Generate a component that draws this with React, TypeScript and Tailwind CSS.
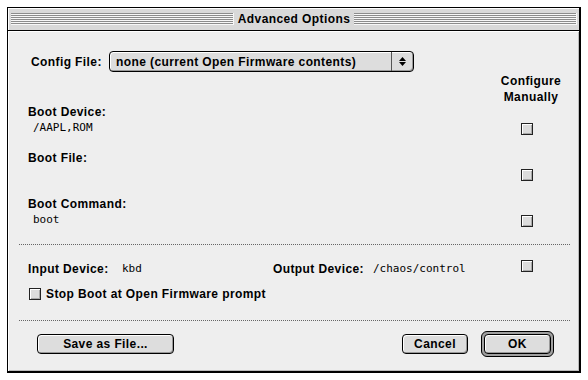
import React from "react";

const label = "font-['Liberation_Sans',Arial,sans-serif] font-bold text-[12px] leading-[16px] tracking-[0.4px] text-black";
const value = "font-['DejaVu_Sans_Mono',monospace] text-[11px] leading-[16px] text-black";

function Check() {
  return (
    <div className="w-[12px] h-[12px] border border-[#222] bg-[#dcdcdc] shadow-[inset_1px_1px_0_#fff,inset_-1px_-1px_0_#a8a8a8]" />
  );
}

function Stripes() {
  return (
    <div className="flex-1 h-[12px] bg-[repeating-linear-gradient(to_bottom,#8c8c8c_0px,#8c8c8c_1px,#f7f7f7_1px,#f7f7f7_2px)] shadow-[inset_-1px_-1px_0_#f7f7f7]" />
  );
}

function Button({ children, w }: { children: React.ReactNode; w: string }) {
  return (
    <div
      className={`${w} h-[20px] rounded-[4px] border border-black bg-[#dddddd] shadow-[inset_1px_1px_0_#fff,inset_-1px_-1px_0_#999] flex items-center justify-center ${label}`}
    >
      {children}
    </div>
  );
}

function FieldRow({ name, val }: { name: string; val?: string }) {
  return (
    <div className="flex h-[46px]">
      <div className="flex-1 pl-[20px]">
        <div className={label}>{name}</div>
        <div className={`${value} pl-[5px]`}>{val}</div>
      </div>
      <div className="w-[80px] mr-[12px] flex justify-center pt-[19px]">
        <Check />
      </div>
    </div>
  );
}

export default function App() {
  return (
    <div className="w-[588px] min-h-[380px] bg-white pt-[7px] pl-[7px]">
      <div className="w-[574px] h-[366px] border border-black border-r-2 border-b-2 flex flex-col bg-[#eeeeee]">
        {/* title bar */}
        <div className="h-[23px] bg-[#d9d9d9] border-b border-black flex items-center pl-[3px] pr-[2px] shadow-[inset_1px_1px_0_#fff]">
          <Stripes />
          <div className={`${label} px-[4px]`}>Advanced Options</div>
          <Stripes />
        </div>

        {/* content */}
        <div className="flex-1 flex flex-col shadow-[inset_1px_1px_0_#fff,inset_-1px_-1px_0_#bbb]">
          <div className="flex items-center h-[21px] mt-[20px] pl-[23px]">
            <div className={`${label} w-[78px]`}>Config File:</div>
            <div className="w-[305px] h-[21px] rounded-[4px] border border-black bg-[#dddddd] shadow-[inset_1px_1px_0_#fff,inset_-1px_-1px_0_#999] flex">
              <div className={`${label} flex-1 pl-[6px] flex items-center`}>
                none (current Open Firmware contents)
              </div>
              <div className="w-[22px] border-l border-[#555] flex flex-col items-center justify-center gap-[1px]">
                <svg width="7" height="4" viewBox="0 0 7 4">
                  <path d="M3.5 0 L7 4 L0 4 Z" fill="#000" />
                </svg>
                <svg width="7" height="4" viewBox="0 0 7 4">
                  <path d="M0 0 L7 0 L3.5 4 Z" fill="#000" />
                </svg>
              </div>
            </div>
          </div>

          <div className="flex h-[32px] pt-[1px]">
            <div className="flex-1" />
            <div className={`${label} w-[84px] mr-[6px] text-center`}>
              <div>Configure</div>
              <div>Manually</div>
            </div>
          </div>

          <FieldRow name="Boot Device:" val="/AAPL,ROM" />
          <FieldRow name="Boot File:" />
          <FieldRow name="Boot Command:" val="boot" />

          <div className="mt-[2px] ml-[11px] mr-[9px] border-t border-dotted border-[#666]" />

          <div className="flex mt-[15px] h-[16px]">
            <div className="flex-1 flex items-center pl-[20px] mt-[1px]">
              <div className={`${label} w-[94px]`}>Input Device:</div>
              <div className={`${value} w-[151px]`}>kbd</div>
              <div className={`${label} w-[100px]`}>Output Device:</div>
              <div className={value}>/chaos/control</div>
            </div>
            <div className="w-[80px] mr-[12px] flex justify-center">
              <Check />
            </div>
          </div>

          <div className="flex items-center gap-[5px] mt-[10px] h-[16px] pl-[21px]">
            <Check />
            <div className={label}>Stop Boot at Open Firmware prompt</div>
          </div>

          <div className="mt-[18px] ml-[11px] mr-[9px] border-t border-dotted border-[#666]" />

          <div className="flex items-center h-[26px] mt-[10px] pl-[29px]">
            <Button w="w-[137px]">Save as File...</Button>
            <div className="flex-1" />
            <Button w="w-[66px]">Cancel</Button>
            <div className="w-[13px]" />
            <div className="w-[73px] h-[26px] rounded-[6px] border border-black bg-[#a0a0a0] p-[2px] flex items-center">
              <Button w="w-full">OK</Button>
            </div>
            <div className="w-[25px]" />
          </div>
        </div>
      </div>
    </div>
  );
}
